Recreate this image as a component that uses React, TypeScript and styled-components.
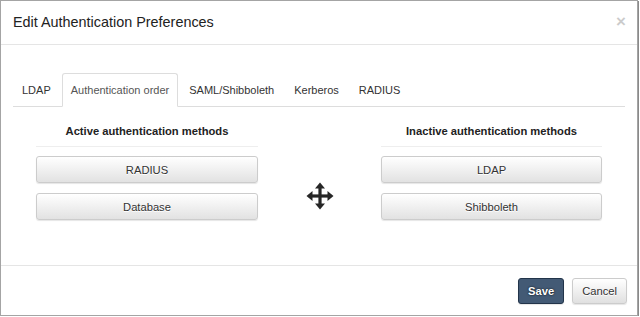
import React, { useState } from "react";
import styled, { createGlobalStyle } from "styled-components";

const GlobalStyle = createGlobalStyle`
  html, body {
    margin: 0;
    padding: 0;
    background: #fff;
  }
  body {
    font-family: "Liberation Sans", Arial, sans-serif;
    color: #333;
  }
`;

const tabs = ["LDAP", "Authentication order", "SAML/Shibboleth", "Kerberos", "RADIUS"];
const activeMethods = ["RADIUS", "Database"];
const inactiveMethods = ["LDAP", "Shibboleth"];

const MoveIcon = () => (
  <svg width="28" height="28" viewBox="0 0 28 28" aria-hidden="true">
    <g fill="#262626">
      <rect x="12.4" y="5" width="3.2" height="18" />
      <rect x="5" y="12.4" width="18" height="3.2" />
      <polygon points="14,0.5 19,6.5 9,6.5" />
      <polygon points="14,27.5 19,21.5 9,21.5" />
      <polygon points="0.5,14 6.5,9 6.5,19" />
      <polygon points="27.5,14 21.5,9 21.5,19" />
    </g>
  </svg>
);

const App = (): JSX.Element => {
  const [activeTab, setActiveTab] = useState(1);

  return (
    <>
      <GlobalStyle />
      <Frame>
        <Header>
          <Title>Edit Authentication Preferences</Title>
          <CloseButton aria-label="Close">×</CloseButton>
        </Header>
        <Body>
          <TabList>
            {tabs.map((t, i) => (
              <Tab key={t} $active={i === activeTab} onClick={() => setActiveTab(i)}>
                {t}
              </Tab>
            ))}
          </TabList>
          <TabPane>
            <Column>
              <ColumnTitle>Active authentication methods</ColumnTitle>
              <MethodList>
                {activeMethods.map((m) => (
                  <MethodButton key={m}>{m}</MethodButton>
                ))}
              </MethodList>
            </Column>
            <MoveCell>
              <MoveIcon />
            </MoveCell>
            <Column>
              <ColumnTitle>Inactive authentication methods</ColumnTitle>
              <MethodList>
                {inactiveMethods.map((m) => (
                  <MethodButton key={m}>{m}</MethodButton>
                ))}
              </MethodList>
            </Column>
          </TabPane>
        </Body>
        <Footer>
          <FooterButton $primary>Save</FooterButton>
          <FooterButton>Cancel</FooterButton>
        </Footer>
      </Frame>
    </>
  );
};

export default App;

const Frame = styled.div`
  box-sizing: border-box;
  width: 638px;
  height: 316px;
  border: 1px solid #a4a4a4;
  box-shadow: 1px 1px 0 #8a8a8a;
  background: #fff;
  display: flex;
  flex-direction: column;
`;

const Header = styled.div`
  display: flex;
  justify-content: space-between;
  align-items: flex-start;
  padding: 11px 11px 12px 12px;
  border-bottom: 1px solid #e5e5e5;
`;

const Title = styled.h4`
  margin: 0;
  font-size: 14.4px;
  font-weight: normal;
  line-height: 20px;
  color: #222;
`;

const CloseButton = styled.button`
  border: 0;
  padding: 0;
  margin-top: 1px;
  background: transparent;
  font-family: inherit;
  font-size: 17px;
  font-weight: bold;
  line-height: 1;
  color: #000;
  opacity: 0.2;
  cursor: pointer;
`;

const Body = styled.div`
  flex: 1;
  padding: 28px 12px 0;
`;

const TabList = styled.div`
  display: flex;
  border-bottom: 1px solid #ddd;
`;

const Tab = styled.div<{ $active?: boolean }>`
  margin-right: 2px;
  margin-bottom: -1px;
  padding: 0 8px;
  line-height: 32px;
  font-size: 11px;
  color: ${(p) => (p.$active ? "#555" : "#333")};
  background: ${(p) => (p.$active ? "#fff" : "transparent")};
  border: 1px solid ${(p) => (p.$active ? "#ddd" : "transparent")};
  border-bottom-color: transparent;
  border-radius: 3px 3px 0 0;
  cursor: pointer;
`;

const TabPane = styled.div`
  display: grid;
  grid-template-columns: 222px 1fr 221px;
  padding: 0 23px;
`;

const Column = styled.div`
  display: flex;
  flex-direction: column;
`;

const ColumnTitle = styled.div`
  margin: 16px 0 9px;
  padding-bottom: 7px;
  border-bottom: 1px solid #eee;
  text-align: center;
  font-size: 11.2px;
  font-weight: bold;
  line-height: 16px;
  color: #222;
`;

const MethodList = styled.div`
  display: flex;
  flex-direction: column;
  gap: 10px;
`;

const MethodButton = styled.button`
  box-sizing: border-box;
  height: 27px;
  border: 1px solid #ccc;
  border-radius: 3px;
  background: linear-gradient(to bottom, #fff 0%, #e2e2e2 100%);
  box-shadow: inset 0 1px 0 rgba(255, 255, 255, 0.15), 0 1px 1px rgba(0, 0, 0, 0.1);
  font-family: inherit;
  font-size: 11.2px;
  color: #333;
  text-shadow: 0 1px 0 #fff;
  cursor: pointer;
`;

const MoveCell = styled.div`
  display: flex;
  justify-content: center;
  align-items: flex-start;
  padding-top: 75px;
`;

const Footer = styled.div`
  display: flex;
  justify-content: flex-end;
  gap: 8px;
  padding: 12px 10px 11px 12px;
  border-top: 1px solid #e5e5e5;
`;

const FooterButton = styled.button<{ $primary?: boolean }>`
  box-sizing: border-box;
  height: 26px;
  padding: 0 9px;
  border-radius: 3px;
  font-family: inherit;
  font-size: 11.2px;
  cursor: pointer;
  border: 1px solid ${(p) => (p.$primary ? "#22344a" : "#ccc")};
  color: ${(p) => (p.$primary ? "#fff" : "#333")};
  font-weight: ${(p) => (p.$primary ? "bold" : "normal")};
  background: ${(p) =>
    p.$primary ? "#435a75" : "linear-gradient(to bottom, #fff 0%, #e0e0e0 100%)"};
  text-shadow: ${(p) => (p.$primary ? "0 0 2px #000" : "0 1px 0 #fff")};
  box-shadow: 0 1px 1px rgba(0, 0, 0, 0.1);
`;
